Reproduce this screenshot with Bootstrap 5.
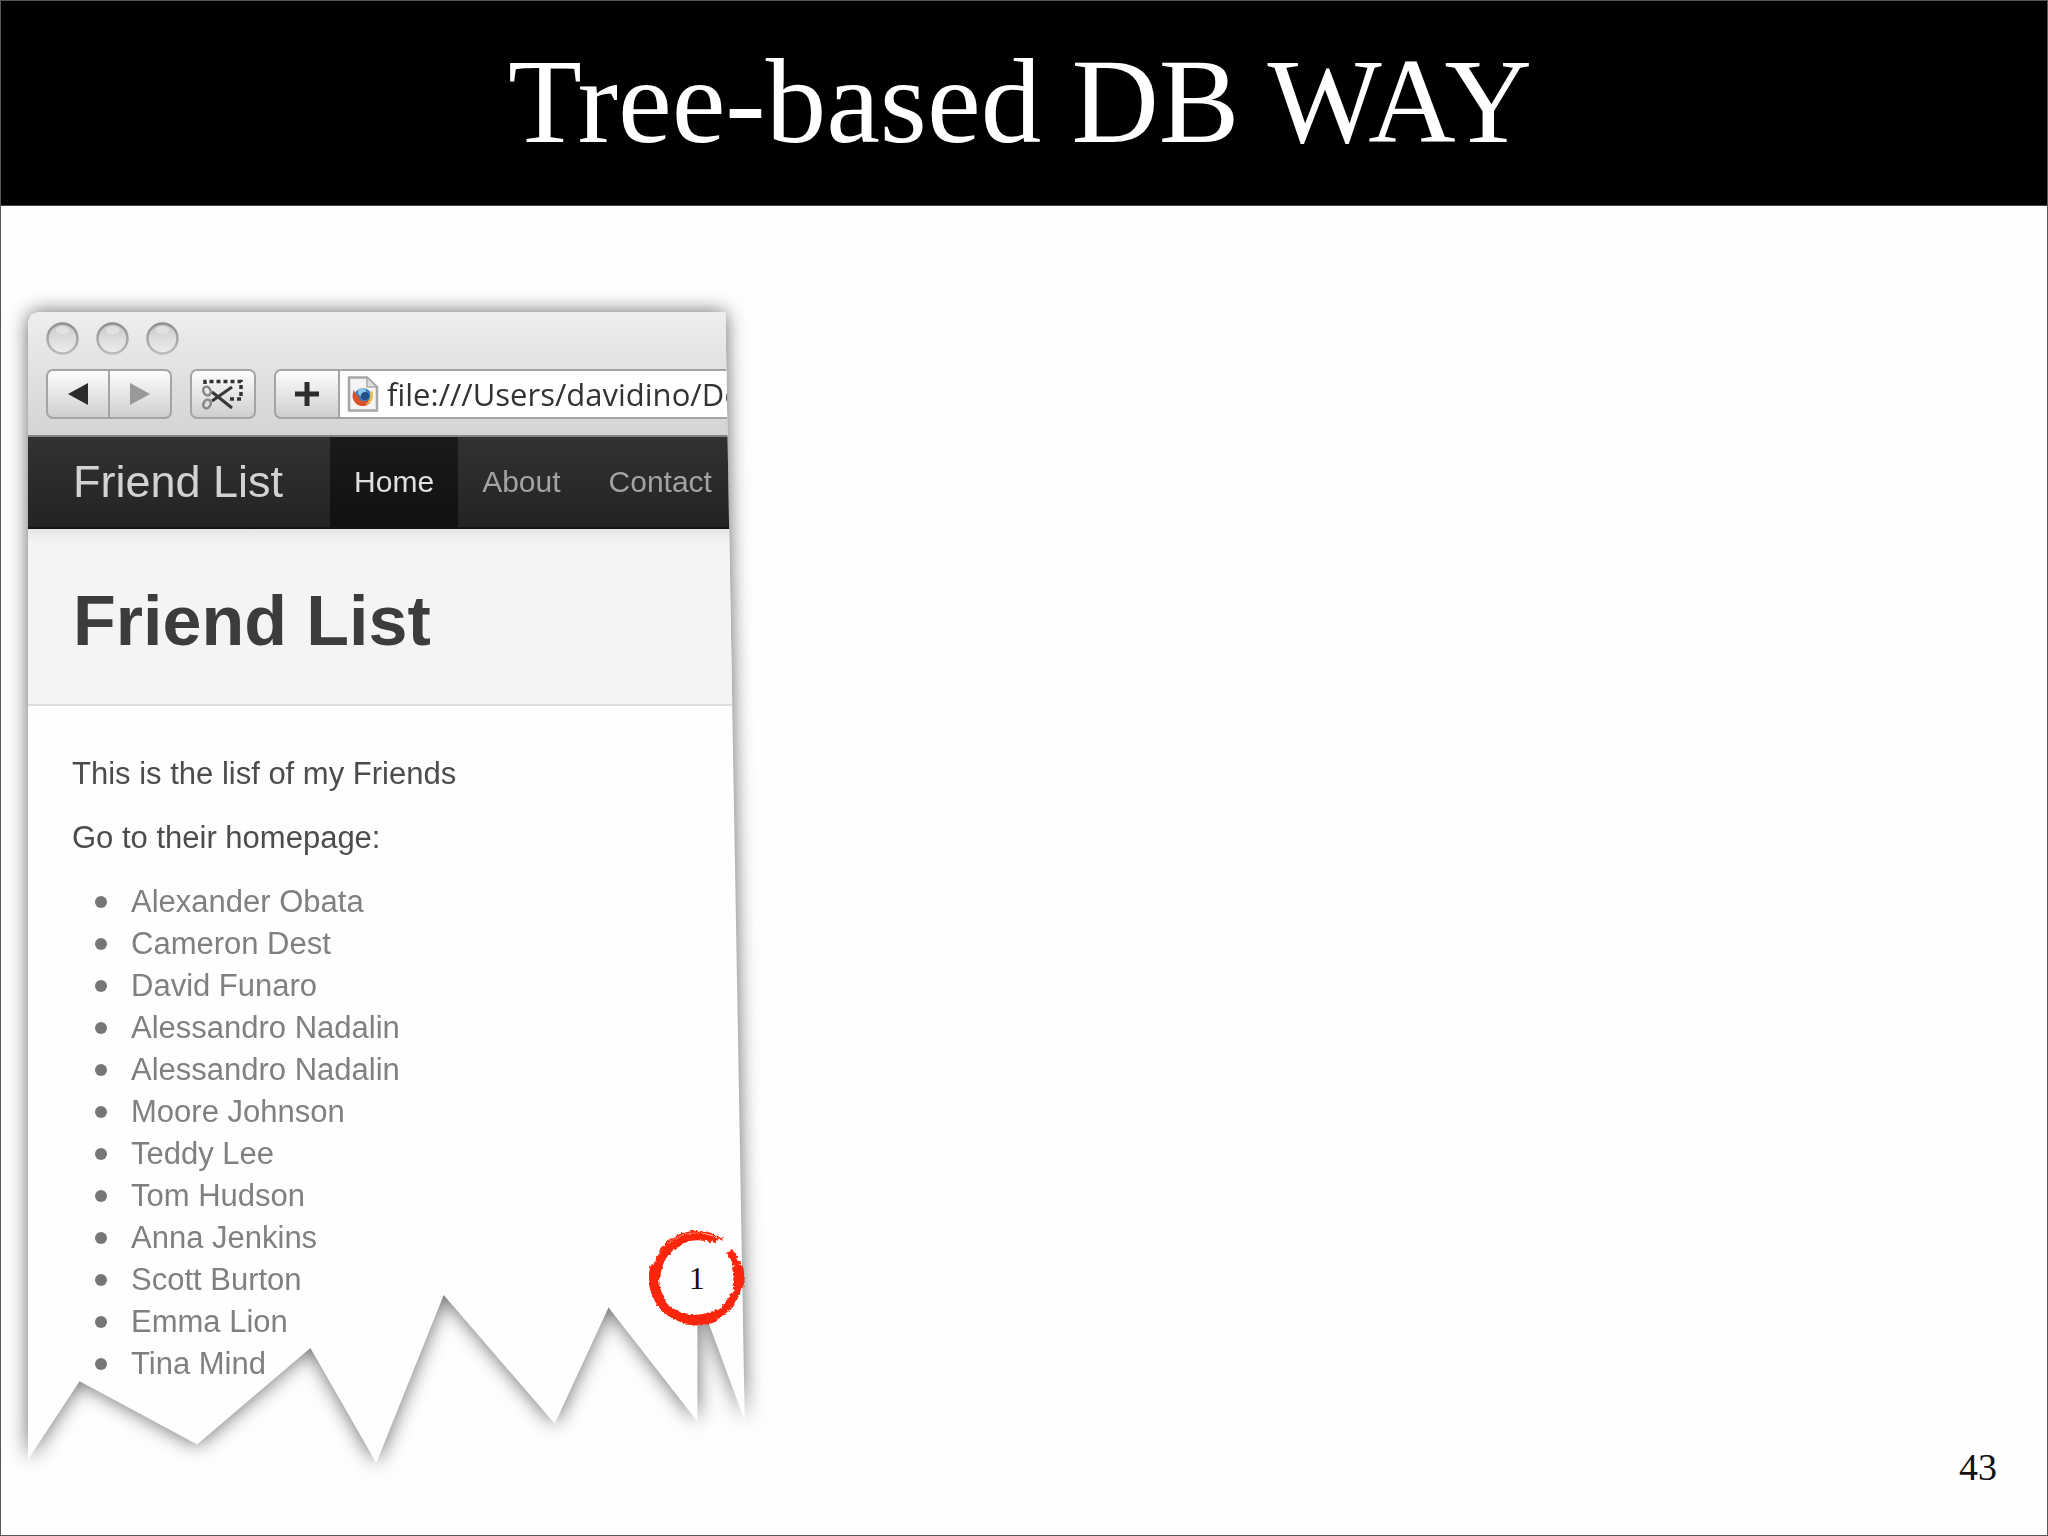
<!DOCTYPE html>
<html lang="en">
<head>
<meta charset="utf-8">
<meta name="viewport" content="width=device-width, initial-scale=1">
<title>Tree-based DB WAY</title>
<link rel="stylesheet" href="https://cdn.jsdelivr.net/npm/bootstrap@5.3.0/dist/css/bootstrap.min.css">
<style>
  body { font-family: "Liberation Sans", Arial, sans-serif; background: #fefefe; border: 1px solid #58585a; }
  .serif { font-family: "Liberation Serif", "Times New Roman", serif; }
  .slide-head { background: #000; color: #fff; border-bottom: 1px solid #4a4448; padding: 32px 8px 36px 0; }
  .slide-head h1 { font-size: 121px; line-height: 136px; font-weight: 400; }
  .slide-body { padding: 106px 50px 46px 27px; }
  .paper-wrap { width: 36.4%; }
  .paper-shadow { filter: drop-shadow(0 0 10px rgba(0,0,0,.6)); }
  .paper {
    background: #fefefe; padding-bottom: 78px;
    clip-path: polygon(0 10px, 3px 3px, 10px 0, 97.3% 0, 100% 96.3%, 93.4% 85.2%, 93.4% 96.4%, 81% 86.5%, 73.5% 96.6%, 58% 85.4%, 48.6% 100%, 39.4% 90%, 23.6% 98.4%, 7.2% 92.9%, 0 99.7%);
  }
  .chrome { background: linear-gradient(#eeeeee, #d5d4d5); border-bottom: 2px solid #858585; padding: 10px 0 16px 18px; }
  .lights { gap: 17px; padding-bottom: 14px; }
  .light { width: 33px; height: 33px; }
  .tools { height: 50px; }
  .tool { border: 2px solid #a4a4a4; background: linear-gradient(#fdfdfd, #cfcfcf); padding: 0; border-radius: 7px; color: #282828; flex-shrink: 0; }
  .tool-nav { width: 64px; }
  .tool-nav + .tool-nav { margin-left: -2px; }
  .tool-cut { width: 66px; margin: 0 18px; }
  .tool-add { width: 66px; }
  .cut-left { border-top-right-radius: 0; border-bottom-right-radius: 0; }
  .cut-right { border-top-left-radius: 0; border-bottom-left-radius: 0; }
  .address { background: #fff; border: solid #a4a4a4; border-width: 2px 0; min-width: 0; padding-left: 7px; }
  .address input { border: 0; outline: 0; background: none; min-width: 0; width: 100%; font: 31px/44px "Open Sans", "Noto Sans", sans-serif; color: #333; padding: 0; }
  .site-nav { background: linear-gradient(#323133, #232224); border-bottom: 2px solid #151416; height: 92px; padding-left: 45px; }
  .site-brand { font-size: 45px; line-height: 90px; color: #d2d2d2; text-decoration: none; margin-right: 47px; }
  .site-nav .site-link { font-size: 30px; line-height: 90px; color: #a3a2a4; padding: 0 24px; text-decoration: none; }
  .site-nav .site-link.active { background: linear-gradient(#1a191b, #111012); color: #e0e0e0; }
  .hero { background: linear-gradient(#e6e6e7, #f4f4f5 14px); border-bottom: 2px solid #dcdcdc; padding: 51px 45px 42px; }
  .hero h2 { font-size: 70px; line-height: 82px; font-weight: 700; color: #3c3c3c; }
  .copy { padding: 47px 44px 0; font-size: 31px; line-height: 42px; color: #4c4c4c; }
  .copy p { margin-bottom: 22px; }
  .friends { list-style: none; padding: 0; margin: 0; }
  .friends li { display: flex; align-items: center; padding-left: 23px; }
  .friends li::before { content: ""; width: 12px; height: 12px; border-radius: 50%; background: #767676; margin-right: 24px; }
  .friends a { color: #808080; text-decoration: none; }
  .step { position: absolute; z-index: 1; left: 86.6%; top: 79.8%; width: 96px; height: 96px; font-size: 32px; color: #111; }
  .step svg { position: absolute; inset: 0; z-index: -1; }
  .page-no { font-size: 38px; line-height: 44px; color: #111; }
</style>
<script src="https://cdn.jsdelivr.net/npm/bootstrap@5.3.0/dist/js/bootstrap.bundle.min.js"></script>
</head>
<body class="d-flex flex-column min-vh-100">
<header class="slide-head text-center">
  <h1 class="serif m-0">Tree-based DB WAY</h1>
</header>
<main class="slide-body flex-grow-1 d-flex justify-content-between align-items-start">
  <section class="paper-wrap position-relative">
    <div class="paper-shadow">
      <div class="paper">
        <div class="chrome">
          <div class="lights d-flex">
            <svg class="light" viewBox="0 0 33 33" aria-hidden="true">
              <defs>
                <linearGradient id="lamp" x2="0" y2="1"><stop offset="0" stop-color="#c2c2c2"/><stop offset=".4" stop-color="#d9d9d9"/><stop offset="1" stop-color="#ededed"/></linearGradient>
                <linearGradient id="rim" x2="0" y2="1"><stop offset="0" stop-color="#8f8f8f"/><stop offset="1" stop-color="#bcbcbc"/></linearGradient>
              </defs>
              <circle cx="16.500" cy="16.500" r="15" fill="url(#lamp)" stroke="url(#rim)" stroke-width="2.500"/><ellipse cx="16.500" cy="8" rx="7" ry="4" fill="#e8e8e8" opacity=".7"/>
            </svg>
            <svg class="light" viewBox="0 0 33 33" aria-hidden="true"><circle cx="16.500" cy="16.500" r="15" fill="url(#lamp)" stroke="url(#rim)" stroke-width="2.500"/><ellipse cx="16.500" cy="8" rx="7" ry="4" fill="#e8e8e8" opacity=".7"/></svg>
            <svg class="light" viewBox="0 0 33 33" aria-hidden="true"><circle cx="16.500" cy="16.500" r="15" fill="url(#lamp)" stroke="url(#rim)" stroke-width="2.500"/><ellipse cx="16.500" cy="8" rx="7" ry="4" fill="#e8e8e8" opacity=".7"/></svg>
          </div>
          <div class="tools d-flex align-items-stretch">
            <button type="button" class="tool tool-nav cut-left d-flex align-items-center justify-content-center" aria-label="Back"><svg width="20" height="22" viewBox="0 0 20 22"><path d="M0 11 20 0v22z" fill="#2c2c2c"/></svg></button>
            <button type="button" class="tool tool-nav cut-right d-flex align-items-center justify-content-center" aria-label="Forward"><svg width="20" height="22" viewBox="0 0 20 22"><path d="M20 11 0 0v22z" fill="#999"/></svg></button>
            <button type="button" class="tool tool-cut d-flex align-items-center justify-content-center" aria-label="Clip"><svg width="42" height="32" viewBox="0 0 42 32" fill="none">
              <path d="M3 6V3.500H39V21H28" stroke="#333" stroke-width="3.500" stroke-dasharray="4 3"/>
              <path d="M30 9 10 23M30 30 10 14" stroke="#383838" stroke-width="3"/>
              <ellipse cx="5" cy="13" rx="3.500" ry="4.500" stroke="#888" stroke-width="2.500" transform="rotate(-30 5 13)"/>
              <ellipse cx="5" cy="26" rx="3.500" ry="4.500" stroke="#888" stroke-width="2.500" transform="rotate(30 5 26)"/>
            </svg></button>
            <button type="button" class="tool tool-add cut-left d-flex align-items-center justify-content-center" aria-label="Add bookmark"><svg width="26" height="26" viewBox="0 0 26 26"><path d="M13 1v24M1 13h24" stroke="#2c2c2c" stroke-width="5"/></svg></button>
            <label class="address flex-grow-1 d-flex align-items-center">
              <svg class="flex-shrink-0 me-2" width="32" height="36" viewBox="0 0 32 36" aria-hidden="true">
                <path d="M2 1.500H20L30 11V34.500H2z" fill="#f4f4f4" stroke="#a6a6a6" stroke-width="2.500"/>
                <path d="M20 1.500V11H30z" fill="#ddd" stroke="#aaa" stroke-width="1.500"/>
                <circle cx="16" cy="21" r="9" fill="#3a7cb8"/><circle cx="15" cy="16" r="4" fill="#8cc8e4"/><circle cx="18" cy="20" r="4" fill="#244f82"/>
                <path d="M7 14c-4 8 1 16 9 16 7 0 11-7 9-14-1 4-1 8-6 9-5 1-8-2-7-5l-3-1z" fill="#d9502b"/>
                <path d="M25 14c3 8-1 14-7 15 4-3 6-8 5-12z" fill="#f0bf45"/>
              </svg>
              <input type="text" aria-label="Address" value="file:///Users/davidino/Documents">
            </label>
          </div>
        </div>
        <nav class="site-nav d-flex">
          <a class="site-brand text-nowrap" href="#">Friend List</a>
          <a class="site-link active" href="#">Home</a>
          <a class="site-link" href="#">About</a>
          <a class="site-link" href="#">Contact</a>
        </nav>
        <div class="hero"><h2 class="m-0">Friend List</h2></div>
        <div class="copy">
          <p>This is the lisf of my Friends</p>
          <p>Go to their homepage:</p>
          <ul class="friends">
            <li><a href="#">Alexander Obata</a></li>
            <li><a href="#">Cameron Dest</a></li>
            <li><a href="#">David Funaro</a></li>
            <li><a href="#">Alessandro Nadalin</a></li>
            <li><a href="#">Alessandro Nadalin</a></li>
            <li><a href="#">Moore Johnson</a></li>
            <li><a href="#">Teddy Lee</a></li>
            <li><a href="#">Tom Hudson</a></li>
            <li><a href="#">Anna Jenkins</a></li>
            <li><a href="#">Scott Burton</a></li>
            <li><a href="#">Emma Lion</a></li>
            <li><a href="#">Tina Mind</a></li>
          </ul>
        </div>
      </div>
    </div>
    <div class="step serif d-flex align-items-center justify-content-center">
      <svg viewBox="0 0 96 96" fill="none" stroke="#fb2607" aria-hidden="true">
        <defs><filter id="rough" x="-10%" y="-10%" width="120%" height="120%"><feTurbulence type="fractalNoise" baseFrequency=".35" numOctaves="2" seed="4"/><feDisplacementMap in="SourceGraphic" scale="4" xChannelSelector="R" yChannelSelector="G"/></filter></defs>
        <circle cx="48" cy="48" r="42" fill="#fefefe" stroke="none"/>
        <g filter="url(#rough)">
          <path d="M68 11A42 42 0 1 0 83 25" stroke-width="5"/>
          <path d="M74 10A46 46 0 0 0 10 22" stroke-width="2"/>
          <path d="M62 10A40 40 0 0 0 9 48" stroke-width="5"/>
          <path d="M30 12A41 41 0 0 0 12 70" stroke-width="8"/>
          <path d="M6 36A42 42 0 0 0 48 90" stroke-width="9"/>
          <path d="M24 83A42 42 0 0 0 86 64" stroke-width="8"/>
          <path d="M40 89A42 42 0 0 0 66 86" stroke-width="11"/>
          <path d="M80 21A42 42 0 0 1 86 66" stroke-width="7"/>
          <path d="M88 36A41 41 0 0 1 89 57" stroke-width="11"/>
        </g>
      </svg>
      <span>1</span>
    </div>
  </section>
  <footer class="page-no serif align-self-end">43</footer>
</main>
</body>
</html>
